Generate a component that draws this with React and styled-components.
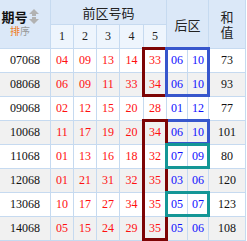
import styled, { createGlobalStyle } from "styled-components";

const GlobalStyle = createGlobalStyle`
  body {
    margin: 0;
    background: #fff;
  }
`;

const COLS = [50, 22, 22, 22, 23, 22, 20, 20, 36];
const HEAD = 48;
const ROW = 24;

const rows = [
  { no: "07068", front: ["04", "09", "13", "14", "33"], back: ["06", "10"], sum: 73 },
  { no: "08068", front: ["06", "09", "11", "33", "34"], back: ["06", "10"], sum: 93 },
  { no: "09068", front: ["02", "12", "15", "20", "28"], back: ["01", "12"], sum: 77 },
  { no: "10068", front: ["11", "17", "19", "20", "34"], back: ["06", "10"], sum: 101 },
  { no: "11068", front: ["01", "13", "16", "18", "32"], back: ["07", "09"], sum: 80 },
  { no: "12068", front: ["01", "21", "31", "32", "35"], back: ["03", "06"], sum: 120 },
  { no: "13068", front: ["10", "17", "27", "34", "35"], back: ["05", "07"], sum: 123 },
  { no: "14068", front: ["05", "15", "24", "29", "35"], back: ["05", "06"], sum: 108 },
];

// marks drawn over the table: column span, row span, colour
const marks = [
  { c0: 5, c1: 5, r0: 0, r1: 1, color: "#7d0505" },
  { c0: 6, c1: 7, r0: 0, r1: 1, color: "#3756cc" },
  { c0: 6, c1: 7, r0: 3, r1: 3, color: "#3756cc" },
  { c0: 5, c1: 5, r0: 3, r1: 7, color: "#7d0505" },
  { c0: 6, c1: 7, r0: 4, r1: 4, color: "#149696" },
  { c0: 6, c1: 7, r0: 6, r1: 6, color: "#149696" },
];

const colStart = (c) => COLS.slice(0, c).reduce((a, w) => a + w + 1, 0);
const colEnd = (c) => colStart(c) + COLS[c];
const rowStart = (r) => HEAD + 1 + r * ROW;
const rowEnd = (r) => rowStart(r) + ROW - 1;

const Wrap = styled.div`
  position: relative;
  width: 246px;
`;

const Grid = styled.div`
  display: grid;
  grid-template-columns: ${COLS.map((w) => `${w}px`).join(" ")};
  grid-template-rows: 24px 23px repeat(8, 23px);
  gap: 1px;
  padding: 0 1px 1px 0;
  background: #c6daf0;
  font-family: "Liberation Serif", "Times New Roman", serif;
  font-size: 12px;
`;

const HeadCell = styled.div`
  grid-column: ${(p) => p.$col};
  grid-row: ${(p) => p.$row};
  display: flex;
  flex-direction: column;
  align-items: center;
  justify-content: center;
  background: ${(p) => (p.$light ? "#eef5fd" : "#dbe8f8")};
  color: #222;
  font-family: ${(p) =>
    p.$digit
      ? `"Liberation Serif", serif`
      : `"Noto Sans CJK SC", "Noto Sans", sans-serif`};
  font-size: ${(p) => (p.$digit ? "12px" : "13px")};
  line-height: 15px;
  text-align: center;
`;

const StackChar = styled.div`
  line-height: 15px;
  height: 15px;
  overflow: visible;
`;

const IssueHead = styled(HeadCell)`
  padding: 0 10px 4px 0;
`;

const IssueTitle = styled.div`
  display: flex;
  align-items: center;
  gap: 1px;
  font-weight: bold;
  font-size: 13px;
  color: #111;
  line-height: 17px;
`;

const SortLink = styled.div`
  font-size: 10px;
  line-height: 12px;
  color: #999;
  span {
    color: #f07a22;
  }
`;

const Cell = styled.div`
  display: flex;
  align-items: center;
  justify-content: center;
  background: ${(p) => (p.$odd ? "#f1f1f1" : "#fff")};
  color: ${(p) => p.$color || "#111"};
`;

const Mark = styled.div`
  position: absolute;
  box-sizing: border-box;
  border: 3px solid ${(p) => p.$color};
  pointer-events: none;
`;

function SortIcon() {
  return (
    <svg width="10" height="15" viewBox="0 0 10 15">
      <polygon points="5,0 10,5 7,5 7,7 3,7 3,5 0,5" fill="#b2b2b2" />
      <polygon points="3,8 7,8 7,10 10,10 5,15 0,10 3,10" fill="#b2b2b2" />
    </svg>
  );
}

function App() {
  return (
    <Wrap>
      <GlobalStyle />
      <Grid>
        <IssueHead $col="1" $row="1 / 3">
          <IssueTitle>
            期号
            <SortIcon />
          </IssueTitle>
          <SortLink>
            <span>排</span>序
          </SortLink>
        </IssueHead>
        <HeadCell $col="2 / 7" $row="1">前区号码</HeadCell>
        <HeadCell $col="7 / 9" $row="1 / 3">后区</HeadCell>
        <HeadCell $col="9" $row="1 / 3">
          <StackChar>和</StackChar>
          <StackChar>值</StackChar>
        </HeadCell>
        {[1, 2, 3, 4, 5].map((n) => (
          <HeadCell key={n} $col={`${n + 1}`} $row="2" $light $digit>
            {n}
          </HeadCell>
        ))}
        {rows.map((row, i) => [
          <Cell key={`${row.no}-no`} $odd={i % 2 === 1}>
            {row.no}
          </Cell>,
          ...row.front.map((n, j) => (
            <Cell key={`${row.no}-f${j}`} $odd={i % 2 === 1} $color="#ff1010">
              {n}
            </Cell>
          )),
          ...row.back.map((n, j) => (
            <Cell key={`${row.no}-b${j}`} $odd={i % 2 === 1} $color="#1010ff">
              {n}
            </Cell>
          )),
          <Cell key={`${row.no}-sum`} $odd={i % 2 === 1}>
            {row.sum}
          </Cell>,
        ])}
      </Grid>
      {marks.map((m, i) => (
        <Mark
          key={i}
          $color={m.color}
          style={{
            left: colStart(m.c0) - 2,
            width: colEnd(m.c1) - colStart(m.c0) + 4,
            top: rowStart(m.r0) - 2,
            height: rowEnd(m.r1) - rowStart(m.r0) + 3,
          }}
        />
      ))}
    </Wrap>
  );
}

export default App;
